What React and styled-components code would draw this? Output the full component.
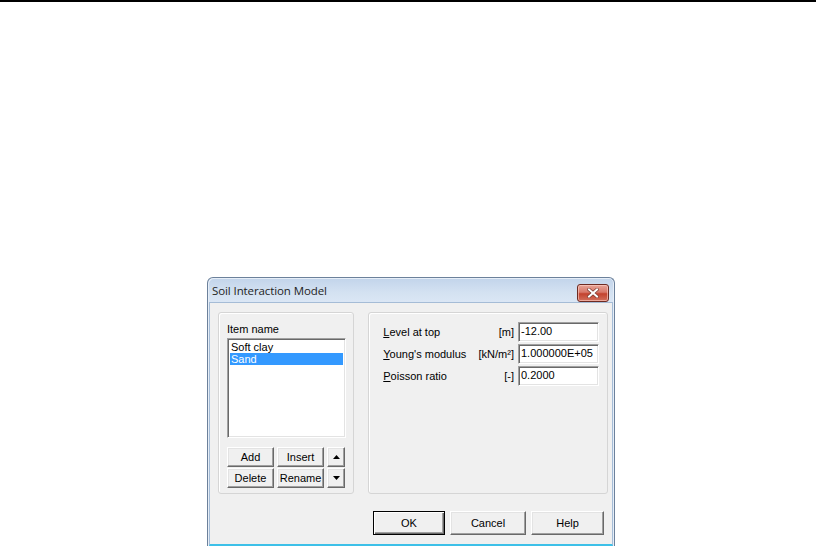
import React from "react";
import styled, { createGlobalStyle } from "styled-components";

const Global = createGlobalStyle`
  html, body { margin: 0; padding: 0; background: #fff; }
  body { font-family: "Liberation Sans", Arial, sans-serif; font-size: 11px; color: #000; }
`;

const Page = styled.div`
  width: 822px;
  height: 548px;
  overflow: hidden;
  display: flex;
  flex-direction: column;
`;

const TopRule = styled.div`
  width: 816px;
  height: 2px;
  background: #000;
  flex: none;
`;

const Stage = styled.div`
  display: flex;
  padding: 275px 0 0 207px;
`;

const Window = styled.div`
  width: 406px;
  height: 268px;
  border: 1px solid #6c819b;
  border-bottom: none;
  border-radius: 6px 6px 0 0;
  background: linear-gradient(to bottom, #c2d4ea 0px, #d3e1f1 14px, #dbe7f5 25px, #dbe7f5 100%);
  display: flex;
  flex-direction: column;
  box-shadow: inset 1px 1px 0 #e6eef8, inset -1px 0 0 #e6eef8;
`;

const TitleBar = styled.div`
  height: 24px;
  display: flex;
  align-items: center;
  justify-content: space-between;
  padding: 0 4px 0 4px;
  flex: none;
`;

const Title = styled.span`
  font-family: "Open Sans", "Noto Sans", sans-serif;
  font-size: 11.5px;
  color: #1e1e1e;
  letter-spacing: -0.1px;
  margin-top: 1px;
`;

const CloseBtn = styled.div`
  width: 30px;
  height: 16px;
  margin-top: 6px;
  margin-right: 1px;
  border: 1px solid #6d2b22;
  border-radius: 3px;
  background: linear-gradient(to bottom, #e7a497 0%, #d8786a 45%, #c3422e 55%, #d2705d 100%);
  box-shadow: inset 0 0 0 1px rgba(255, 210, 200, 0.6);
  display: flex;
  align-items: center;
  justify-content: center;
`;

const Client = styled.div`
  flex: 1;
  margin: 0 1px 0 1px;
  background: #f0f0f0;
  border: 1px solid #a5bcd6;
  border-bottom: 2px solid #3dc0e8;
  display: flex;
  flex-direction: column;
  padding: 9px 4px 0 8px;
`;

const Groups = styled.div`
  display: flex;
  gap: 14px;
`;

const Group = styled.div`
  width: ${(p) => p.$w}px;
  height: 182px;
  box-sizing: border-box;
  border: 1px solid #d5d5d5;
  border-radius: 3px;
  box-shadow: inset 1px 1px 0 #fff;
  display: flex;
  flex-direction: column;
  padding: ${(p) => p.$pad};
`;

const Label = styled.div`
  height: 13px;
  line-height: 13px;
  margin-bottom: 2px;
`;

const ListBox = styled.div`
  width: 119px;
  height: 100px;
  box-sizing: border-box;
  background: #fff;
  border-style: solid;
  border-width: 1px;
  border-color: #a0a0a0 #fff #fff #a0a0a0;
  box-shadow: inset 1px 1px 0 #696969, inset -1px -1px 0 #e3e3e3;
  padding: 2px;
  display: flex;
  flex-direction: column;
`;

const ListItem = styled.div`
  height: 12px;
  line-height: 12px;
  padding-left: 1px;
  background: ${(p) => (p.$sel ? "#3399ff" : "transparent")};
  color: ${(p) => (p.$sel ? "#fff" : "#000")};
`;

const BtnGrid = styled.div`
  margin-top: 9px;
  display: grid;
  grid-template-columns: 47px 47px 18px;
  grid-auto-rows: 20px;
  column-gap: 3px;
  row-gap: 1px;
`;

const Btn = styled.button`
  box-sizing: border-box;
  width: ${(p) => (p.$w ? p.$w + "px" : "auto")};
  height: ${(p) => (p.$h ? p.$h + "px" : "100%")};
  margin: 0;
  padding: 0;
  font-family: "Liberation Sans", Arial, sans-serif;
  font-size: 11px;
  color: #000;
  background: #f0f0f0;
  border-style: solid;
  border-width: 1px;
  border-color: ${(p) => (p.$def ? "#000" : "#fff #696969 #696969 #fff")};
  box-shadow: ${(p) =>
    p.$def
      ? "inset 1px 1px 0 #fff, inset -1px -1px 0 #696969, inset -2px -2px 0 #a0a0a0"
      : "inset -1px -1px 0 #a0a0a0, inset 1px 1px 0 #e3e3e3"};
  display: flex;
  align-items: center;
  justify-content: center;
`;

const Fields = styled.div`
  display: flex;
  flex-direction: column;
  gap: 2px;
`;

const FieldRow = styled.div`
  display: flex;
  align-items: center;
  height: 20px;
`;

const FieldLabel = styled.span`
  flex: 1;
  u { text-decoration: underline; text-underline-offset: 1px; }
`;

const Unit = styled.span`
  margin-right: 4px;
`;

const Input = styled.div`
  width: 81px;
  height: 20px;
  box-sizing: border-box;
  background: #fff;
  border-style: solid;
  border-width: 1px;
  border-color: #a0a0a0 #fff #fff #a0a0a0;
  box-shadow: inset 1px 1px 0 #696969, inset -1px -1px 0 #e3e3e3;
  padding: 0 0 0 2px;
  line-height: 17px;
`;

const Footer = styled.div`
  display: flex;
  justify-content: flex-end;
  gap: 5px;
  margin-top: 17px;
  padding-right: 4px;
`;

const Tri = ({ down }) => (
  <svg width="7" height="4" viewBox="0 0 7 4">
    <polygon points={down ? "0,0 7,0 3.5,4" : "0,4 7,4 3.5,0"} fill="#000" />
  </svg>
);

const CloseX = () => (
  <svg width="12" height="10" viewBox="0 0 12 10">
    <path d="M2 1.5 L10 8.5 M10 1.5 L2 8.5" stroke="#7a3a30" strokeWidth="3.4" strokeLinecap="square" />
    <path d="M2 1.5 L10 8.5 M10 1.5 L2 8.5" stroke="#fff" strokeWidth="2" strokeLinecap="square" />
  </svg>
);

const fields = [
  { label: "Level at top", key: "L", rest: "evel at top", unit: "[m]", value: "-12.00" },
  { label: "Young's modulus", key: "Y", rest: "oung's modulus", unit: "[kN/m²]", value: "1.000000E+05" },
  { label: "Poisson ratio", key: "P", rest: "oisson ratio", unit: "[-]", value: "0.2000" },
];

export default function App() {
  return (
    <Page>
      <Global />
      <TopRule />
      <Stage>
        <Window>
          <TitleBar>
            <Title>Soil Interaction Model</Title>
            <CloseBtn>
              <CloseX />
            </CloseBtn>
          </TitleBar>
          <Client>
            <Groups>
              <Group $w={137} $pad="10px 0 0 8px">
                <Label>Item name</Label>
                <ListBox>
                  <ListItem>Soft clay</ListItem>
                  <ListItem $sel>Sand</ListItem>
                </ListBox>
                <BtnGrid>
                  <Btn>Add</Btn>
                  <Btn>Insert</Btn>
                  <Btn><Tri /></Btn>
                  <Btn>Delete</Btn>
                  <Btn>Rename</Btn>
                  <Btn><Tri down /></Btn>
                </BtnGrid>
              </Group>
              <Group $w={241} $pad="9px 8px 0 14px">
                <Fields>
                  {fields.map((f) => (
                    <FieldRow key={f.label}>
                      <FieldLabel>
                        <u>{f.key}</u>
                        {f.rest}
                      </FieldLabel>
                      <Unit>{f.unit}</Unit>
                      <Input>{f.value}</Input>
                    </FieldRow>
                  ))}
                </Fields>
              </Group>
            </Groups>
            <Footer>
              <Btn $w={72} $h={24} $def>OK</Btn>
              <Btn $w={76} $h={24}>Cancel</Btn>
              <Btn $w={73} $h={24}>Help</Btn>
            </Footer>
          </Client>
        </Window>
      </Stage>
    </Page>
  );
}
